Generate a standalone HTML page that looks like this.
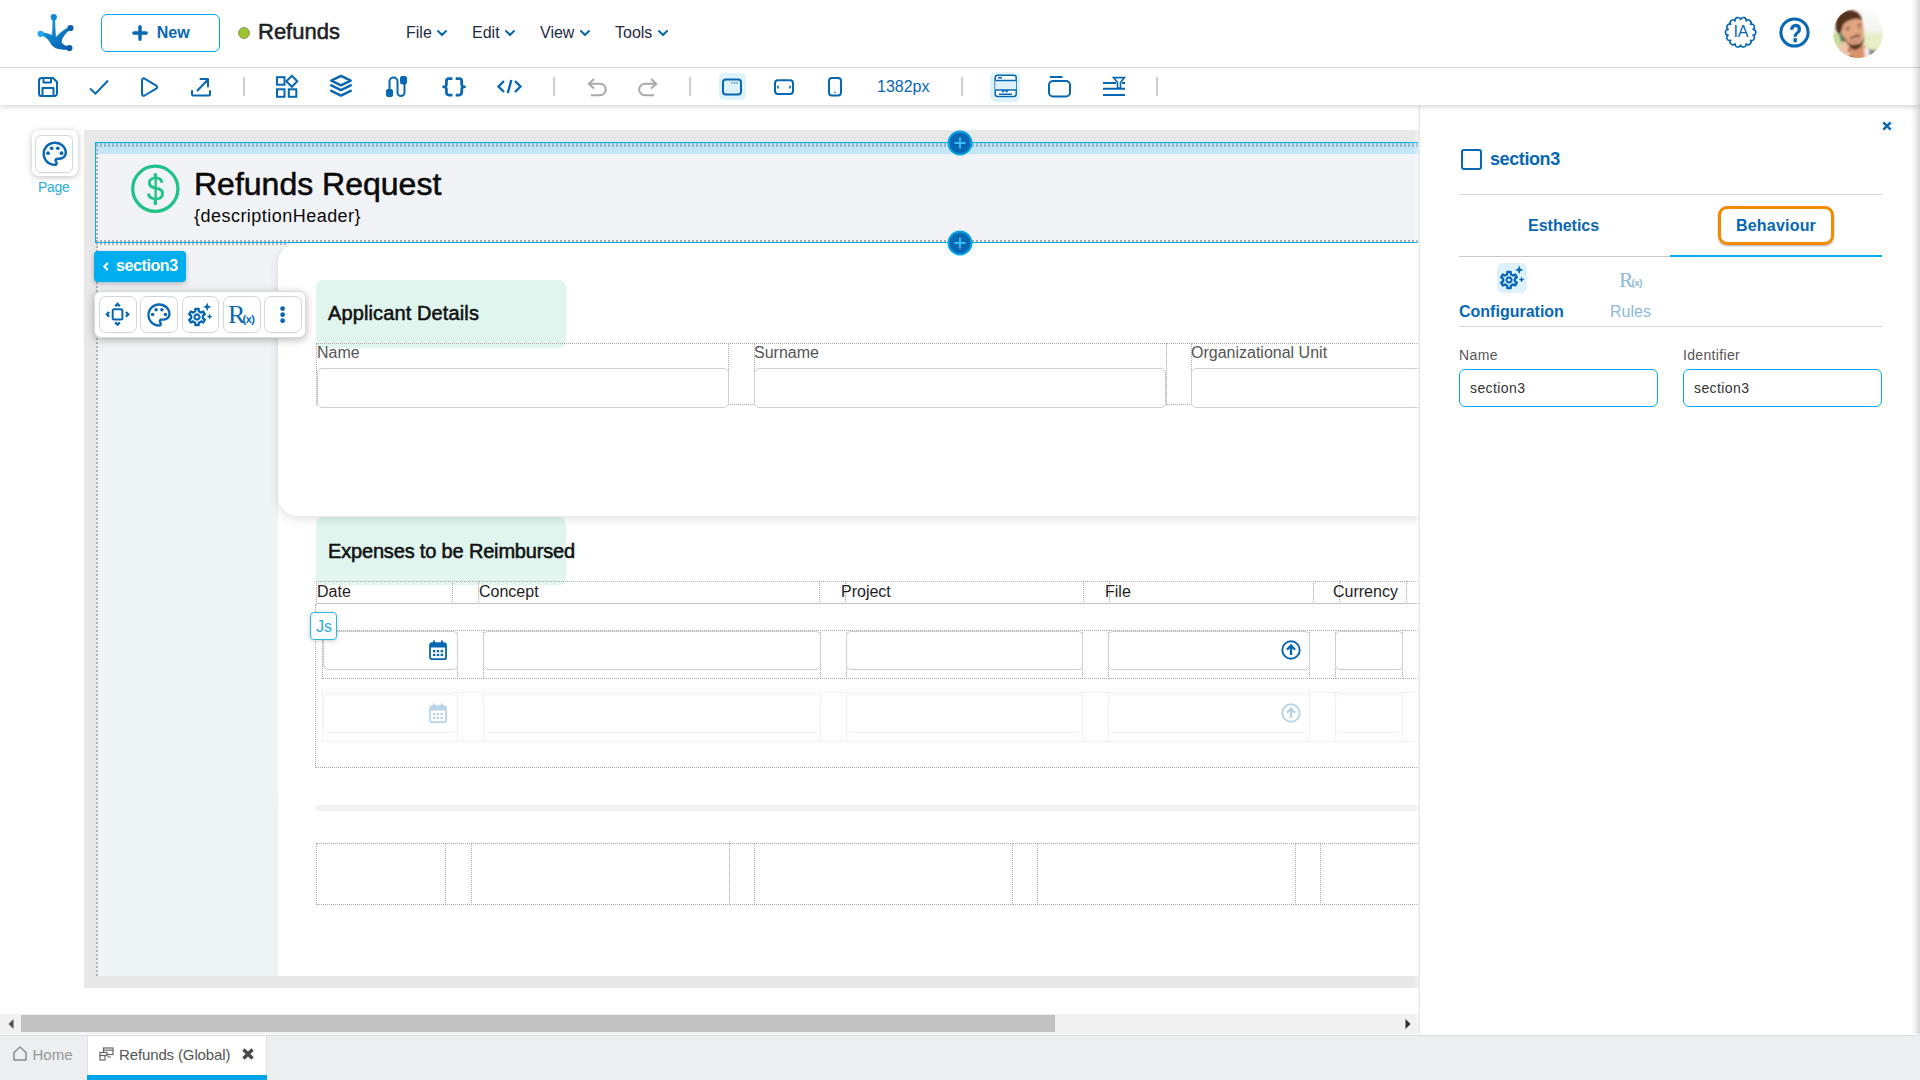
<!DOCTYPE html>
<html lang="en">
<head>
<meta charset="utf-8">
<title>Refunds</title>
<style>
*{box-sizing:border-box;margin:0;padding:0}
html,body{width:1920px;height:1080px;overflow:hidden;background:#fff}
body{font-family:"Liberation Sans",sans-serif;color:#212529;position:relative}
svg{display:block;overflow:visible;position:absolute}
.t{position:absolute;white-space:nowrap;line-height:1}
.b{font-weight:bold}
.m{-webkit-text-stroke:.55px currentColor}
.a{position:absolute}
/* header */
#hdr{position:absolute;left:0;top:0;width:1920px;height:68px;background:#fff;border-bottom:1px solid #d3d8dd;z-index:30}
#newbtn{position:absolute;left:101px;top:14px;width:119px;height:38px;border:1px solid #00a9eb;border-radius:6px;background:#fff}
#tb{position:absolute;left:0;top:68px;width:1920px;height:37px;background:#fff;box-shadow:0 2px 5px rgba(0,0,0,.16);z-index:29}
.sep{position:absolute;top:9px;width:2px;height:19px;background:#cfcfcf}
.menu{color:#1f2a44;font-size:16px;top:25px}
/* canvas */
#main{position:absolute;left:0;top:105px;width:1420px;height:929px;overflow:hidden;background:#fff}
#frame{position:absolute;left:84px;top:25px;width:1340px;height:858px;background:#e8e8e8}
.dot{border:1px dotted #a9a9a9}
.inp{position:absolute;background:#fff;border:1px solid #cfcfcf;border-radius:5px}
.lbl{font-size:16px;color:#555}
.hl{font-size:16px;color:#1e1e1e;top:584px}
/* panel */
#panel{position:absolute;left:1420px;top:105px;width:500px;height:929px;background:#fff;box-shadow:-1.500px 0 0 #e7e9e9,-3px 0 6px rgba(255,255,255,.5);z-index:20}
.pin{position:absolute;height:38px;border:1px solid #00aeef;border-radius:6px;background:#fff}
/* bottom */
#bot{position:absolute;left:0;top:1035px;width:1920px;height:45px;background:#edeef0;border-top:1px solid #d9dcdf;z-index:31}
</style>
</head>
<body>
<div id="hdr">
  <!-- logo -->
  <svg style="left:36px;top:13px" width="40" height="40" viewBox="0 0 40 40">
    <defs><linearGradient id="lg" x1="0" y1="0" x2="1" y2="1"><stop offset="0" stop-color="#1aa3e6"/><stop offset="1" stop-color="#0659a8"/></linearGradient></defs>
    <g fill="url(#lg)" stroke="url(#lg)" stroke-linecap="round">
      <path d="M16.600 4 C17 12 16.600 18 16 22.500 C13 20.800 9 19.800 4.600 19.600 L4.400 22 C9 23 12 26 14 29 C16 33.500 20 36 25 36 C28 36.800 31 36.700 33.400 36.200 L33.600 33.800 C30 33.500 27 32 25.500 29.500 C25.500 25 29 20 34.800 16.200 L33.600 13.900 C27 17 22.500 21 20 24.500 C19 18 19 12 18.900 4 Z" stroke-width="0.5"/>
    </g>
    <circle cx="17.75" cy="4.2" r="3.1" fill="#1389d3"/>
    <circle cx="34.5" cy="15" r="3.1" fill="#0a62b0"/>
    <circle cx="4.6" cy="20.8" r="3.1" fill="#22a8ea"/>
    <circle cx="33.4" cy="35" r="3.1" fill="#0a5cab"/>
  </svg>
  <div id="newbtn">
    <svg style="left:30px;top:10px" width="16" height="16" viewBox="0 0 16 16"><path d="M8 1.8v12.4M1.8 8h12.4" stroke="#0767b2" stroke-width="3.4" stroke-linecap="round" fill="none"/></svg>
    <span class="t b" style="left:54.7px;top:10px;font-size:16px;color:#0767b2">New</span>
  </div>
  <div class="a" style="left:237.700px;top:27px;width:12px;height:12px;border-radius:50%;background:#9cc42c;border:1px solid #8a9a76"></div>
  <span class="t m" id="ttl" style="left:258px;top:21px;font-size:22px;color:#212121">Refunds</span>
  <span class="t menu" style="left:406px">File</span>
  <span class="t menu" style="left:472px">Edit</span>
  <span class="t menu" style="left:540px">View</span>
  <span class="t menu" style="left:615px">Tools</span>
  <svg class="chev" style="left:437px;top:29.500px" width="10" height="7" viewBox="0 0 10 7"><path d="M1 1l4 4 4-4" stroke="#0767b2" stroke-width="2" fill="none" stroke-linecap="round" stroke-linejoin="round"/></svg>
  <svg class="chev" style="left:505px;top:29.500px" width="10" height="7" viewBox="0 0 10 7"><path d="M1 1l4 4 4-4" stroke="#0767b2" stroke-width="2" fill="none" stroke-linecap="round" stroke-linejoin="round"/></svg>
  <svg class="chev" style="left:580px;top:29.500px" width="10" height="7" viewBox="0 0 10 7"><path d="M1 1l4 4 4-4" stroke="#0767b2" stroke-width="2" fill="none" stroke-linecap="round" stroke-linejoin="round"/></svg>
  <svg class="chev" style="left:658px;top:29.500px" width="10" height="7" viewBox="0 0 10 7"><path d="M1 1l4 4 4-4" stroke="#0767b2" stroke-width="2" fill="none" stroke-linecap="round" stroke-linejoin="round"/></svg>
  <!-- IA -->
  <svg id="ia" style="left:1725px;top:17px" width="31" height="31" viewBox="0 0 31 31"><path d="M15.60 2.60 A2.83 2.83 0 0 1 21.11 3.86 A2.83 2.83 0 0 1 25.53 7.38 A2.83 2.83 0 0 1 27.98 12.47 A2.83 2.83 0 0 1 27.98 18.13 A2.83 2.83 0 0 1 25.53 23.22 A2.83 2.83 0 0 1 21.11 26.74 A2.83 2.83 0 0 1 15.60 28.00 A2.83 2.83 0 0 1 10.09 26.74 A2.83 2.83 0 0 1 5.67 23.22 A2.83 2.83 0 0 1 3.22 18.13 A2.83 2.83 0 0 1 3.22 12.47 A2.83 2.83 0 0 1 5.67 7.38 A2.83 2.83 0 0 1 10.09 3.86 A2.83 2.83 0 0 1 15.60 2.60Z" fill="none" stroke="#0767b2" stroke-width="1.600" stroke-linejoin="round"/></svg>
  <span class="t" style="left:1733.500px;top:24.400px;font-size:16px;color:#0767b2;letter-spacing:-.3px">IA</span>
  <!-- help -->
  <svg style="left:1779px;top:17px" width="31" height="31" viewBox="0 0 31 31"><circle cx="15.5" cy="15.5" r="13.6" fill="none" stroke="#0767b2" stroke-width="3"/></svg>
  <span class="t b" style="left:1787.500px;top:21px;font-size:25px;color:#0767b2;transform:scaleX(.84);-webkit-text-stroke:.4px #0767b2">?</span>
  <!-- avatar -->
  <svg id="av" style="left:1833px;top:8px" width="50" height="50" viewBox="0 0 50 50">
    <defs><clipPath id="avc"><circle cx="25" cy="25" r="25"/></clipPath><filter id="avb" x="-20%" y="-20%" width="140%" height="140%"><feGaussianBlur stdDeviation="1"/></filter>
    <linearGradient id="avbg" x1="0" y1="0" x2="0" y2="1"><stop offset="0" stop-color="#fbfbfa"/><stop offset=".42" stop-color="#f4f5f1"/><stop offset=".58" stop-color="#e6edc8"/><stop offset="1" stop-color="#d3e3a2"/></linearGradient></defs>
    <g clip-path="url(#avc)"><rect width="50" height="50" fill="url(#avbg)"/>
    <g filter="url(#avb)">
      <ellipse cx="42" cy="34" rx="9" ry="7" fill="#e9eec6"/>
      <ellipse cx="4" cy="33" rx="6" ry="8" fill="#c9dd9c"/>
      <path d="M18 40l14-3 3 14-19 1z" fill="#d9936b"/>
      <path d="M31 39l5 2 4 10-8 1z" fill="#f1ece9"/>
      <path d="M36 41l8 2 3 9-10 0z" fill="#8b8b95"/>
      <path d="M8.500 14c1-4 6-6.500 12-7 5 0 8.500 3 9.500 9 1 7 1 13-.5 18-1.500 5-5 8.500-8.500 8.500-4 0-8-4-10.500-9-1.500-4-2.500-13-2-19.500z" fill="#e2a582"/>
      <path d="M3 22C1 12 6 4 14 2.500c6-1 12 1 14.500 7.500l.5 3c-2-2-5-2.500-8-2-5 1-9 3-11 6l-2 8-3 1z" fill="#55331e"/>
      <path d="M10 27c.5 6 4 13 12 15 6-1 9-7 9.500-15-1 5-3 8-5.500 9l-7 1c-4-2-7-5-9-10z" fill="#44291a"/>
      <path d="M16.500 29.500c3-1.500 7.500-2 10.500-3.200l.3 1.500c-3 1.500-7.500 2.500-10.500 3z" fill="#6b4330"/>
      <path d="M17.500 31.500c3 .5 6.500-.5 9.500-3-1 4-3 5.500-5 5.500-2 0-3.500-.8-4.500-2.500z" fill="#b3604e"/>
      <path d="M19 31.800c2.300 0 4.500-.8 6.300-2l-.8 1.700-3.800 1z" fill="#f3e7e2"/>
      <path d="M20 38c2 .6 4 .3 6-.8l-1 3-4 .3z" fill="#66492a"/>
      <path d="M12.500 20.500l4.500-1.300M24 17.500l4.500-1.300" stroke="#6a4330" stroke-width="1.200"/>
      <path d="M13.500 22.300l3-.7M25 19.700l3-.7" stroke="#7a4f3c" stroke-width="1"/>
      <path d="M21.500 26.500l2 .8 2.200-1.500" stroke="#bb7656" stroke-width="1.200" fill="none"/>
      <path d="M6 25.500l2.300-.5 2.500 8-2.300 1.500z" fill="#2e6a5a"/>
      <path d="M5 41c1.500-5 5-8 9-6.500l4 6.500-2 9-9-2z" fill="#f0c4a8"/>
      <path d="M14.500 40.500l2.500-.7 1 3.500-2.500 .9z" fill="#b25a50"/>
      <path d="M16 48l4 1-1 3-4-1.500z" fill="#2a2a2a"/>
    </g></g>
  </svg>
</div>
<div id="tb">
 <!-- coords inside are relative to y=68 -->
 <svg style="left:0;top:0" width="1200" height="37" viewBox="0 68 1200 37" fill="none" stroke="#0767b2" stroke-width="2" stroke-linecap="round" stroke-linejoin="round">
  <!-- save -->
  <path d="M39 80.5a2.5 2.5 0 0 1 2.500-2.500h11.500l4 4v11.500a2.500 2.500 0 0 1-2.500 2.500h-13a2.500 2.500 0 0 1-2.500-2.500z"/>
  <path d="M43.500 78.500v4h7.500v-4M42.500 95.500v-7.500h11v7.500"/>
  <!-- check -->
  <path d="M90 88.500l5.500 5.200 12.500-13.200" stroke-linecap="butt" stroke-linejoin="miter"/>
  <!-- play -->
  <path d="M142 80v14c0 1.500 1.300 2.200 2.600 1.500l11.600-6.800c1.300-.8 1.300-2.200 0-3l-11.600-7c-1.300-.8-2.600 0-2.600 1.300z"/>
  <!-- export -->
  <path d="M192 91v3.500a1 1 0 0 0 1 1h16a1 1 0 0 0 1-1v-3.500M197.500 90.500l10.500-11M200.500 79h7.500v7.500"/>
  <!-- grid -->
  <g stroke-linecap="butt" stroke-linejoin="miter" stroke-width="2">
  <rect x="277" y="77.200" width="7.500" height="7.500"/><rect x="277" y="89.300" width="7.500" height="7.500"/><rect x="288.800" y="89.300" width="7.500" height="7.500"/>
  <path d="M291.800 75.800l5.500 5.500-5.500 5.500-5.500-5.500z"/>
  </g>
  <!-- layers -->
  <g stroke-linejoin="round" stroke-width="2.5">
  <path d="M341 75.900l9.700 4.700-9.700 4.700-9.700-4.700z"/>
  <path d="M331.300 85.400l9.700 4.700 9.700-4.700M331.300 90.900l9.700 4.700 9.700-4.700"/>
  </g>
  <!-- route -->
  <path d="M389.500 90v-8.500a4 4 0 0 1 8 0v11a3.500 3.500 0 0 0 7 0v-9"/>
  <rect x="386.500" y="89.500" width="6" height="7" rx="1.500" fill="#0767b2" stroke-width="1"/>
  <rect x="400.500" y="76.500" width="6" height="7.500" rx="1.500" fill="#0767b2" stroke-width="1"/>
  <!-- braces -->
  <g stroke-width="2.8" stroke-linecap="butt" stroke-linejoin="round">
  <path d="M452.4 78.700h-3.500a2.500 2.500 0 0 0-2.500 2.500v3.300a2.400 2.400 0 0 1-2.800 2.400 2.400 2.400 0 0 1 2.800 2.400v3.300a2.500 2.500 0 0 0 2.500 2.500h3.500"/>
  <path d="M455.700 78.700h3.500a2.500 2.500 0 0 1 2.500 2.500v3.300a2.400 2.400 0 0 0 2.800 2.400 2.400 2.400 0 0 0-2.800 2.400v3.300a2.500 2.500 0 0 1-2.500 2.500h-3.500"/>
  </g>
  <!-- code -->
  <g stroke-width="2.400" stroke-linecap="butt" stroke-linejoin="miter">
  <path d="M504 81l-5.500 5.500 5.500 5.500M515 81l5.500 5.500-5.500 5.500M511.300 80l-3.500 13"/>
  </g>
  <!-- undo / redo -->
  <g stroke="#a9a9a9" stroke-linecap="butt" stroke-linejoin="miter">
  <path d="M594 79l-5.200 4.700 5.200 4.700M589 83.700h11a5.800 5.800 0 0 1 0 11.600h-9"/>
  <path d="M651 79l5.200 4.700-5.200 4.700M656 83.700h-11a5.800 5.800 0 0 0 0 11.600h9"/>
  </g>
  <!-- desktop -->
  <rect x="719" y="73" width="27" height="27" rx="5" fill="#ddf2fb" stroke="none"/>
  <rect x="723" y="79.600" width="18" height="14.800" rx="3"/>
  <path d="M731.500 82.800h1.300M734 82.800h1.300M736.500 82.800h1.300" stroke-width="1.300" stroke-linecap="butt"/>
  <!-- tablet -->
  <rect x="775" y="80.200" width="18" height="13.800" rx="3"/>
  <path d="M778 86.300v1.600M790 86.300v1.600" stroke-width="1.600"/>
  <!-- mobile -->
  <rect x="829" y="78" width="12" height="17.600" rx="3"/>
  <path d="M834.300 92.300h1.400" stroke-width="1.300" stroke-linecap="butt"/>
  <!-- layout1 -->
  <rect x="990" y="72" width="30" height="30" rx="6" fill="#ddf2fb" stroke="none"/>
  <g stroke-width="1.500" stroke-linecap="butt">
  <rect x="995.200" y="75.200" width="21" height="21.200" rx="2.500" fill="#fff"/><rect x="995.200" y="80.500" width="21" height="9.500" fill="#ddf2fb" stroke="none"/>
  <path d="M995.200 80.500h21M995.200 90h21M998 77.700h4M1002 91.600h2.300M1005.500 91.600h2.300M999 94.200h13"/>
  </g>
  <!-- layout2 -->
  <path d="M1050 77h12.500" stroke-linecap="butt"/>
  <rect x="1049" y="81" width="21" height="15.500" rx="4"/>
  <!-- layout3 -->
  <g stroke-linecap="butt" stroke-linejoin="miter">
  <path d="M1103 83h13M1122 83h3M1103 88.800h22M1103 95h22"/>
  <path d="M1113.500 77.600h11l-4 5v5.500h-3v-5.500z" stroke-width="1.600"/>
  </g>
 </svg>
 <div class="sep" style="left:243px"></div>
 <div class="sep" style="left:553px"></div>
 <div class="sep" style="left:689px"></div>
 <div class="sep" style="left:961px"></div>
 <div class="sep" style="left:1156px"></div>
 <span class="t" id="pxw" style="left:877px;top:11px;font-size:16px;color:#0767b2">1382px</span>
</div>
<div id="main">
 <!-- all coords relative to main (top = 105) => use wrapper shifted -->
 <div class="a" id="cv" style="left:0;top:-105px;width:1420px;height:1140px">
  <div id="frame" style="left:84px;top:130px;width:1340px;height:858px"></div>
  <!-- page white -->
  <div class="a" style="left:97px;top:143px;width:1330px;height:833px;background:#fff"></div>
  <!-- left column section3 -->
  <div class="a" style="left:278px;top:243px;width:24px;height:24px;background:#f1f2f6"></div>
  <div class="a" style="left:97px;top:243px;width:181px;height:733px;background:linear-gradient(180deg,#f2f3f7 0%,#eff4f5 18%,#eef4f4 100%)"></div>
  <div class="a" style="left:96px;top:244px;width:2px;height:732px;background:repeating-linear-gradient(180deg,transparent 0 2.500px,#b3b3b3 2.500px 4px)"></div>
  <!-- expenses green box (under card shadow) -->
  <div class="a" style="left:316px;top:517px;width:250px;height:68px;background:#dff5ee;border-radius:7px"></div>
  <!-- white card -->
  <div class="a" style="left:278px;top:244px;width:1200px;height:272px;background:#fff;border-radius:18px 0 0 20px;box-shadow:0 3px 10px rgba(0,0,0,.12)"></div>
  <!-- header section (selected) -->
  <div class="a" style="left:96px;top:143px;width:1340px;height:99px;background:#f2f3f7"></div>
  <div class="a" style="left:96px;top:143px;width:1340px;height:11px;background:#c3e5f5"></div>
  <div class="a" style="left:96px;top:143px;width:1340px;height:4px;background:repeating-linear-gradient(90deg,#93b8cc 0 2px,transparent 2px 4px)"></div>
  <div class="a" style="left:96px;top:147px;width:2px;height:94px;background:repeating-linear-gradient(180deg,transparent 0 2px,#b3b3b3 2px 4px)"></div>
  <div class="a" style="left:96px;top:240px;width:1340px;height:2px;background:repeating-linear-gradient(90deg,#aaa 0 2px,transparent 2px 4px)"></div>
  <div class="a" style="left:96px;top:243px;width:192px;height:1.500px;background:repeating-linear-gradient(90deg,#b5b5b5 0 2px,transparent 2px 4px)"></div>
  <div class="a" style="left:95px;top:142px;width:1340px;height:101px;border:1px solid #00b2ec"></div>
  <!-- dollar icon -->
  <svg style="left:131px;top:165px" width="48" height="48" viewBox="0 0 48 48"><circle cx="24.3" cy="23.8" r="22.6" fill="none" stroke="#20c387" stroke-width="3.3"/><path d="M24.3 8.300v5M24.3 35v5" stroke="#20c387" stroke-width="3.200"/></svg>
  <span class="t" id="dol" style="left:145.800px;top:171px;font-size:34px;color:#20c387;-webkit-text-stroke:.3px #20c387;transform:scaleX(.93)">$</span>
  <span class="t m" id="h1" style="left:194px;top:168px;font-size:32px;color:#0a0a0a">Refunds Request</span>
  <span class="t" id="h2" style="letter-spacing:.47px;left:194px;top:207px;font-size:18px;color:#0a0a0a">{descriptionHeader}</span>
  <!-- plus handles -->
  <svg style="left:947px;top:130px" width="26" height="26" viewBox="0 0 26 26"><circle cx="13" cy="13" r="11.500" fill="#0767b2" stroke="#00a3e4" stroke-width="2"/><path d="M13 7.500v11M7.500 13h11" stroke="#3cc0f5" stroke-width="1.800"/></svg>
  <svg style="left:947px;top:230px" width="26" height="26" viewBox="0 0 26 26"><circle cx="13" cy="13" r="11.500" fill="#0767b2" stroke="#00a3e4" stroke-width="2"/><path d="M13 7.500v11M7.500 13h11" stroke="#3cc0f5" stroke-width="1.800"/></svg>
  <!-- section3 tag -->
  <div class="a" style="left:94px;top:251px;width:92px;height:31px;background:#00aeef;border-radius:4px;box-shadow:0 2px 5px rgba(0,0,0,.25)">
    <svg style="left:9px;top:11px" width="6" height="9" viewBox="0 0 6 9"><path d="M4.800 1L1.300 4.500 4.800 8" stroke="#fff" stroke-width="2" fill="none"/></svg>
    <span class="t b" id="tag" style="letter-spacing:-.4px;left:22px;top:7px;font-size:16px;color:#fff">section3</span>
  </div>
  <!-- floating toolbar -->
  <div class="a" id="ft" style="left:94px;top:290.500px;width:211.500px;height:47px;background:#fff;border:1px solid #d8dadd;border-radius:7px;box-shadow:0 2px 8px rgba(0,0,0,.28)"></div>
  <!-- Applicant details -->
  <div class="a" style="left:316px;top:280px;width:250px;height:68px;background:#dff5ee;border-radius:7px"></div>
  <span class="t m" id="ad" style="letter-spacing:.12px;left:328px;top:303px;font-size:20px;color:#111">Applicant Details</span>
  <div class="a dot" style="left:316px;top:343px;width:413px;height:62px"></div>
  <div class="a dot" style="left:728px;top:343px;width:27px;height:62px"></div>
  <div class="a dot" style="left:754px;top:343px;width:413px;height:62px"></div>
  <div class="a dot" style="left:1166px;top:343px;width:26px;height:62px"></div>
  <div class="a dot" style="left:1191px;top:343px;width:300px;height:62px"></div>
  <span class="t lbl" style="left:317px;top:345.2px">Name</span>
  <span class="t lbl" style="left:754px;top:345.2px">Surname</span>
  <span class="t lbl" style="left:1191px;top:345.2px">Organizational Unit</span>
  <div class="inp" style="left:317px;top:368px;width:412px;height:40px"></div>
  <div class="inp" style="left:754px;top:368px;width:412px;height:40px"></div>
  <div class="inp" style="left:1191px;top:368px;width:300px;height:40px"></div>
  <!-- Expenses -->
  <span class="t m" id="ex" style="letter-spacing:-.17px;left:328px;top:541px;font-size:20px;color:#111">Expenses to be Reimbursed</span>
  <!-- table header -->
  <div class="a dot" style="left:316px;top:581px;width:137px;height:23px"></div>
  <div class="a dot" style="left:452px;top:581px;width:27px;height:23px"></div>
  <div class="a dot" style="left:478px;top:581px;width:342px;height:23px"></div>
  <div class="a dot" style="left:819px;top:581px;width:27px;height:23px"></div>
  <div class="a dot" style="left:845px;top:581px;width:239px;height:23px"></div>
  <div class="a dot" style="left:1083px;top:581px;width:27px;height:23px"></div>
  <div class="a dot" style="left:1109px;top:581px;width:205px;height:23px"></div>
  <div class="a dot" style="left:1313px;top:581px;width:27px;height:23px"></div>
  <div class="a dot" style="left:1339px;top:581px;width:68px;height:23px"></div>
  <div class="a dot" style="left:1406px;top:581px;width:40px;height:23px"></div>
  <div class="a" style="left:316px;top:603px;width:1130px;height:1px;background:#c4c4c4"></div>
  <span class="t hl" style="left:317px">Date</span>
  <span class="t hl" style="left:479px">Concept</span>
  <span class="t hl" style="left:841px">Project</span>
  <span class="t hl" style="left:1105px">File</span>
  <span class="t hl" style="left:1333px">Currency</span>
  <!-- table body container -->
  <div class="a dot" style="left:315px;top:604px;width:1130px;height:164px;border-top:none"></div>
  <!-- row 1 -->
  <div class="a" id="row1" style="left:0;top:0">
   <div class="a dot" style="left:322px;top:630px;width:136px;height:49px"></div>
   <div class="a dot" style="left:457px;top:630px;width:27px;height:49px"></div>
   <div class="a dot" style="left:483px;top:630px;width:338px;height:49px"></div>
   <div class="a dot" style="left:820px;top:630px;width:27px;height:49px"></div>
   <div class="a dot" style="left:846px;top:630px;width:237px;height:49px"></div>
   <div class="a dot" style="left:1082px;top:630px;width:27px;height:49px"></div>
   <div class="a dot" style="left:1108px;top:630px;width:202px;height:49px"></div>
   <div class="a dot" style="left:1309px;top:630px;width:27px;height:49px"></div>
   <div class="a dot" style="left:1335px;top:630px;width:68px;height:49px"></div>
   <div class="a dot" style="left:1402px;top:630px;width:40px;height:49px"></div>
   <div class="inp" style="left:323px;top:631px;width:135px;height:39px"></div>
   <div class="inp" style="left:483px;top:631px;width:338px;height:39px"></div>
   <div class="inp" style="left:846px;top:631px;width:237px;height:39px"></div>
   <div class="inp" style="left:1108px;top:631px;width:202px;height:39px"></div>
   <div class="inp" style="left:1335px;top:631px;width:68px;height:39px"></div>
   <!-- calendar -->
   <svg style="left:429px;top:640px" width="18" height="20" viewBox="0 0 18 20"><rect x="1" y="3.200" width="16" height="16" rx="2" fill="#fff" stroke="#0767b2" stroke-width="1.800"/><path d="M1 4.500a1.500 1.500 0 0 1 1.500-1.500h13a1.500 1.500 0 0 1 1.500 1.500v3h-16z" fill="#0767b2"/><path d="M5 0.500v4M13 0.500v4" stroke="#0767b2" stroke-width="2"/><g fill="#0767b2"><rect x="4" y="10" width="2.400" height="2.300"/><rect x="7.800" y="10" width="2.400" height="2.300"/><rect x="11.600" y="10" width="2.400" height="2.300"/><rect x="4" y="13.800" width="2.400" height="2.300"/><rect x="7.800" y="13.800" width="2.400" height="2.300"/><rect x="11.600" y="13.800" width="2.400" height="2.300"/></g></svg>
   <!-- upload -->
   <svg style="left:1281px;top:640px" width="20" height="20" viewBox="0 0 20 20"><circle cx="10" cy="10" r="8.700" fill="#fff" stroke="#0767b2" stroke-width="1.900"/><path d="M10 15v-8.500M6 9.800l4-4.300 4 4.300" stroke="#0767b2" stroke-width="2.300" fill="none" stroke-linejoin="miter"/></svg>
  </div>
  <div class="a" id="row2" style="left:0;top:0;opacity:.28">
   <div class="a dot" style="left:322px;top:692px;width:136px;height:50px"></div>
   <div class="a dot" style="left:457px;top:692px;width:27px;height:50px"></div>
   <div class="a dot" style="left:483px;top:692px;width:338px;height:50px"></div>
   <div class="a dot" style="left:820px;top:692px;width:27px;height:50px"></div>
   <div class="a dot" style="left:846px;top:692px;width:237px;height:50px"></div>
   <div class="a dot" style="left:1082px;top:692px;width:27px;height:50px"></div>
   <div class="a dot" style="left:1108px;top:692px;width:202px;height:50px"></div>
   <div class="a dot" style="left:1309px;top:692px;width:27px;height:50px"></div>
   <div class="a dot" style="left:1335px;top:692px;width:68px;height:50px"></div>
   <div class="a dot" style="left:1402px;top:692px;width:40px;height:50px"></div>
   <div class="inp" style="left:323px;top:694px;width:135px;height:39px"></div>
   <div class="inp" style="left:483px;top:694px;width:338px;height:39px"></div>
   <div class="inp" style="left:846px;top:694px;width:237px;height:39px"></div>
   <div class="inp" style="left:1108px;top:694px;width:202px;height:39px"></div>
   <div class="inp" style="left:1335px;top:694px;width:68px;height:39px"></div>
   <!-- calendar -->
   <svg style="left:429px;top:703px" width="18" height="20" viewBox="0 0 18 20"><rect x="1" y="3.200" width="16" height="16" rx="2" fill="#fff" stroke="#0767b2" stroke-width="1.800"/><path d="M1 4.500a1.500 1.500 0 0 1 1.500-1.500h13a1.500 1.500 0 0 1 1.500 1.500v3h-16z" fill="#0767b2"/><path d="M5 0.500v4M13 0.500v4" stroke="#0767b2" stroke-width="2"/><g fill="#0767b2"><rect x="4" y="10" width="2.400" height="2.300"/><rect x="7.800" y="10" width="2.400" height="2.300"/><rect x="11.600" y="10" width="2.400" height="2.300"/><rect x="4" y="13.800" width="2.400" height="2.300"/><rect x="7.800" y="13.800" width="2.400" height="2.300"/><rect x="11.600" y="13.800" width="2.400" height="2.300"/></g></svg>
   <!-- upload -->
   <svg style="left:1281px;top:703px" width="20" height="20" viewBox="0 0 20 20"><circle cx="10" cy="10" r="8.700" fill="#fff" stroke="#0767b2" stroke-width="1.900"/><path d="M10 15v-8.500M6 9.800l4-4.300 4 4.300" stroke="#0767b2" stroke-width="2.300" fill="none" stroke-linejoin="miter"/></svg>
  </div>
  <!-- JS badge -->
  <div class="a" style="left:310px;top:612px;width:27px;height:28px;background:#fff;border:1px solid #29b6e8;border-radius:4px;box-shadow:0 1px 4px rgba(0,0,0,.2)"><span class="t" id="js" style="left:5px;top:6px;font-size:16px;color:#29abe2">Js</span></div>
  <!-- bottom bar + cells -->
  <div class="a" style="left:316px;top:805px;width:1130px;height:6px;background:#f2f2f2"></div>
  <div class="a dot" style="left:316px;top:843px;width:130px;height:62px"></div>
  <div class="a dot" style="left:445px;top:843px;width:27px;height:62px"></div>
  <div class="a dot" style="left:471px;top:843px;width:259px;height:62px"></div>
  <div class="a dot" style="left:729px;top:843px;width:26px;height:62px"></div>
  <div class="a dot" style="left:754px;top:843px;width:259px;height:62px"></div>
  <div class="a dot" style="left:1012px;top:843px;width:26px;height:62px"></div>
  <div class="a dot" style="left:1037px;top:843px;width:259px;height:62px"></div>
  <div class="a dot" style="left:1295px;top:843px;width:26px;height:62px"></div>
  <div class="a dot" style="left:1320px;top:843px;width:259px;height:62px"></div>
 </div>
</div>
<div class="a" id="fl" style="left:0;top:0;z-index:12">
<div class="a" style="left:32px;top:130px;width:46px;height:46px;background:#fff;border-radius:7px;box-shadow:0 1px 6px rgba(0,0,0,.25)"></div>
<div class="a" style="left:35px;top:135px;width:38px;height:38px;background:#fff;border:1px solid #d3d6da;border-radius:6px"></div>
<svg style="left:39.75px;top:138.55px" width="29.5" height="29.5" viewBox="0 0 24 24" fill="#0767b2"><path d="M12 22C6.490 22 2 17.510 2 12S6.490 2 12 2s10 4.040 10 9c0 3.310-2.690 6-6 6h-1.770c-.280 0-.500.220-.500.500 0 .120.050.230.130.330.410.470.640 1.060.640 1.670A2.500 2.500 0 0 1 12 22zm0-18c-4.410 0-8 3.590-8 8s3.590 8 8 8c.280 0 .500-.220.500-.500a.540.540 0 0 0-.140-.350c-.410-.460-.630-1.050-.630-1.650a2.500 2.500 0 0 1 2.500-2.500H16c2.210 0 4-1.790 4-4 0-3.860-3.590-7-8-7z"/><circle cx="6.500" cy="11.500" r="1.500"/><circle cx="9.500" cy="7.500" r="1.500"/><circle cx="14.500" cy="7.500" r="1.500"/><circle cx="17.500" cy="11.500" r="1.500"/></svg>
<span class="t" id="pg" style="left:38px;top:180px;font-size:14px;letter-spacing:-.3px;color:#29abe2">Page</span>
<div class="a" style="left:99.3px;top:296.200px;width:37.400px;height:36.600px;border:1px solid #d3d6da;border-radius:7px;background:#fff"></div>
<div class="a" style="left:140.3px;top:296.200px;width:37.400px;height:36.600px;border:1px solid #d3d6da;border-radius:7px;background:#fff"></div>
<div class="a" style="left:182px;top:296.200px;width:37.400px;height:36.600px;border:1px solid #d3d6da;border-radius:7px;background:#fff"></div>
<div class="a" style="left:223.3px;top:296.200px;width:37.400px;height:36.600px;border:1px solid #d3d6da;border-radius:7px;background:#fff"></div>
<div class="a" style="left:264.3px;top:296.200px;width:37.400px;height:36.600px;border:1px solid #d3d6da;border-radius:7px;background:#fff"></div>
<svg style="left:105px;top:302px" width="25" height="25" viewBox="105 302 25 25" fill="none" stroke="#0767b2" stroke-width="2"><rect x="112.700" y="309.200" width="9.700" height="10.200" rx="1.500"/><path d="M115.200 306.300l2.300-2.300 2.300 2.300M115.200 322.400l2.300 2.300 2.300-2.300M109.200 312l-2.300 2.300 2.300 2.300M125.900 312l2.300 2.300-2.300 2.300" stroke-width="2.300"/></svg>
<svg style="left:145.00px;top:301.30px" width="28" height="28" viewBox="0 0 24 24" fill="#0767b2"><path d="M12 22C6.490 22 2 17.510 2 12S6.490 2 12 2s10 4.040 10 9c0 3.310-2.690 6-6 6h-1.770c-.280 0-.500.220-.500.500 0 .120.050.230.130.330.410.470.640 1.060.640 1.670A2.500 2.500 0 0 1 12 22zm0-18c-4.410 0-8 3.590-8 8s3.590 8 8 8c.280 0 .500-.220.500-.500a.540.540 0 0 0-.140-.350c-.410-.460-.630-1.050-.630-1.650a2.500 2.500 0 0 1 2.500-2.500H16c2.210 0 4-1.790 4-4 0-3.860-3.590-7-8-7z"/><circle cx="6.500" cy="11.500" r="1.500"/><circle cx="9.500" cy="7.500" r="1.500"/><circle cx="14.500" cy="7.500" r="1.500"/><circle cx="17.500" cy="11.500" r="1.500"/></svg>
<svg style="left:197.4px;top:316.6px;opacity:1" width="1" height="1" viewBox="0 0 1 1"><g transform="scale(1.0)"><path d="M-1.79 -5.73 L-1.64 -8.14 L1.64 -8.14 L1.79 -5.73 L4.06 -4.42 L6.23 -5.49 L7.87 -2.65 L5.86 -1.31 L5.86 1.31 L7.87 2.65 L6.23 5.49 L4.06 4.42 L1.79 5.73 L1.64 8.14 L-1.64 8.14 L-1.79 5.73 L-4.06 4.42 L-6.23 5.49 L-7.87 2.65 L-5.86 1.31 L-5.86 -1.31 L-7.87 -2.65 L-6.23 -5.49 L-4.06 -4.42Z" fill="none" stroke="#0767b2" stroke-width="2.350" stroke-linejoin="round"/><circle cx="0" cy="0" r="2.600" fill="none" stroke="#0767b2" stroke-width="2.100"/><path d="M10.20 -14.40 L11.42 -11.32 L14.50 -10.10 L11.42 -8.88 L10.20 -5.80 L8.98 -8.88 L5.90 -10.10 L8.98 -11.32Z" fill="#0767b2"/><path d="M12.60 -3.40 L13.45 -1.25 L15.60 -0.40 L13.45 0.45 L12.60 2.60 L11.75 0.45 L9.60 -0.40 L11.75 -1.25Z" fill="#0767b2"/></g></svg>
<span class="t" style="left:228px;top:302px;font-family:'Liberation Serif',serif;font-size:26px;color:#0767b2">R</span>
<span class="t" style="left:242.500px;top:313.500px;font-size:11px;font-weight:bold;color:#0767b2;letter-spacing:-0.500px">(x)</span>
<svg style="left:279px;top:305px" width="7" height="19" viewBox="279 305 7 19" fill="#0767b2"><circle cx="282.600" cy="308.600" r="2.400"/><circle cx="282.600" cy="314.700" r="2.400"/><circle cx="282.600" cy="320.700" r="2.400"/></svg>
</div>
<div id="panel">
 <div class="a" id="pn" style="left:-1420px;top:-105px;width:1920px;height:1080px">
  <!-- close -->
  <svg style="left:1882px;top:121px" width="10" height="10" viewBox="0 0 10 10"><path d="M1.300 1.300l7.400 7.400M8.700 1.300L1.300 8.700" stroke="#0767b2" stroke-width="2.400" stroke-linecap="butt"/></svg>
  <!-- title -->
  <div class="a" style="left:1461px;top:149px;width:21px;height:21px;border:2px solid #0767b2;border-radius:3px"></div>
  <span class="t b" id="ptitle" style="letter-spacing:-.4px;left:1490px;top:150px;font-size:18px;color:#0767b2">section3</span>
  <div class="a" style="left:1459px;top:194px;width:423px;height:1px;background:#d4d4d4"></div>
  <!-- tabs -->
  <span class="t b" id="tab1" style="left:1528px;top:218px;font-size:16px;color:#0767b2">Esthetics</span>
  <div class="a" style="left:1718px;top:206px;width:116px;height:39px;border:3px solid #f18a00;border-radius:9px;box-shadow:0 1px 2px rgba(0,0,0,.35)"></div>
  <span class="t b" id="tab2" style="letter-spacing:.2px;left:1736px;top:218px;font-size:16px;color:#0767b2">Behaviour</span>
  <div class="a" style="left:1459px;top:256px;width:211px;height:1px;background:#c9c9c9"></div>
  <div class="a" style="left:1670px;top:255px;width:212px;height:2px;background:#00aeef"></div>
  <!-- sub tabs -->
  <div class="a" style="left:1497px;top:263px;width:30px;height:30px;border-radius:6px;background:#ddf2fb"></div>
  <span class="t b" id="cfg" style="left:1459px;top:304px;font-size:16px;color:#0767b2">Configuration</span>
  <span class="t" id="rules" style="left:1610px;top:304px;font-size:16px;color:#8db7db">Rules</span>
  <div class="a" style="left:1459px;top:326px;width:423px;height:1px;background:#d4d4d4"></div>
  <!-- fields -->
  <span class="t" id="lname" style="letter-spacing:.4px;left:1459px;top:348px;font-size:14px;color:#555">Name</span>
  <span class="t" id="lid" style="letter-spacing:.33px;left:1683px;top:348px;font-size:14px;color:#555">Identifier</span>
  <div class="pin" style="left:1459px;top:369px;width:199px"><span class="t" style="left:10px;top:11px;font-size:14px;letter-spacing:.4px;color:#333">section3</span></div>
  <div class="pin" style="left:1683px;top:369px;width:199px"><span class="t" style="left:10px;top:11px;font-size:14px;letter-spacing:.4px;color:#333">section3</span></div>
 </div>
</div>
<div class="a" style="left:1910px;top:0;width:10px;height:1034px;z-index:40;background:linear-gradient(90deg,rgba(0,0,0,0) 0%,rgba(0,0,0,.03) 35%,rgba(0,0,0,.09) 70%,rgba(0,0,0,.17) 100%)"></div>
<div class="a" style="left:0;top:0;z-index:21">
<svg style="left:1508.6px;top:279.7px;opacity:1" width="1" height="1" viewBox="0 0 1 1"><g transform="scale(1.0)"><path d="M-1.79 -5.73 L-1.64 -8.14 L1.64 -8.14 L1.79 -5.73 L4.06 -4.42 L6.23 -5.49 L7.87 -2.65 L5.86 -1.31 L5.86 1.31 L7.87 2.65 L6.23 5.49 L4.06 4.42 L1.79 5.73 L1.64 8.14 L-1.64 8.14 L-1.79 5.73 L-4.06 4.42 L-6.23 5.49 L-7.87 2.65 L-5.86 1.31 L-5.86 -1.31 L-7.87 -2.65 L-6.23 -5.49 L-4.06 -4.42Z" fill="none" stroke="#0767b2" stroke-width="2.350" stroke-linejoin="round"/><circle cx="0" cy="0" r="2.600" fill="none" stroke="#0767b2" stroke-width="2.100"/><path d="M10.20 -14.40 L11.42 -11.32 L14.50 -10.10 L11.42 -8.88 L10.20 -5.80 L8.98 -8.88 L5.90 -10.10 L8.98 -11.32Z" fill="#0767b2"/><path d="M12.60 -3.40 L13.45 -1.25 L15.60 -0.40 L13.45 0.45 L12.60 2.60 L11.75 0.45 L9.60 -0.40 L11.75 -1.25Z" fill="#0767b2"/></g></svg>
<span class="t" style="left:1619px;top:270px;font-family:'Liberation Serif',serif;font-size:21.500px;color:#8db7db">R</span>
<span class="t" style="left:1631.500px;top:278px;font-size:9.500px;font-weight:bold;color:#8db7db;letter-spacing:-0.300px">(x)</span>
</div>
<!-- scrollbar -->
<div class="a" style="left:0;top:1014px;width:1420px;height:20px;background:#f1f1f1;z-index:10">
  <div class="a" style="left:21px;top:1px;width:1034px;height:17px;background:#c1c1c1"></div>
  <svg style="left:8px;top:5px" width="6" height="10" viewBox="0 0 6 10"><path d="M5.500 0v10L0.500 5z" fill="#505050"/></svg>
  <svg style="left:1405px;top:5px" width="6" height="10" viewBox="0 0 6 10"><path d="M0.500 0v10L5.500 5z" fill="#303030"/></svg>
</div>
<div id="bot">
  <svg style="left:13px;top:9.500px" width="14" height="15" viewBox="0 0 14 15"><path d="M1 6.500L7 1l6 5.500v7.500H1z" fill="none" stroke="#8a8a8a" stroke-width="1.500" stroke-linejoin="round"/></svg>
  <span class="t" id="home" style="left:32.500px;top:10.700px;font-size:15px;color:#969696">Home</span>
  <div class="a" style="left:87px;top:0;width:180px;height:44px;background:#fff;border-left:1px solid #e1e3e6;border-right:1px solid #e1e3e6">
    <div class="a" style="left:-1px;top:39px;width:180px;height:5px;background:#00a3e8"></div>
    <svg style="left:11px;top:10.500px" width="15" height="14" viewBox="0 0 15 14" fill="none" stroke="#666" stroke-width="1.200"><rect x="4.500" y="1" width="9.500" height="6.500"/><path d="M4.500 3.200h9.500"/><rect x="1" y="5.500" width="7" height="3" fill="#fff"/><rect x="1" y="8.500" width="5" height="4.500" fill="#fff"/><path d="M8.500 10h3"/></svg>
    <span class="t" id="rg" style="left:31px;top:10.700px;font-size:15px;letter-spacing:-.13px;color:#555">Refunds (Global)</span>
    <svg style="left:154px;top:11.500px" width="12" height="12" viewBox="0 0 12 12"><path d="M1.500 1.500l9 9M10.500 1.500l-9 9" stroke="#4a4a4a" stroke-width="3.300"/></svg>
  </div>
</div>
</body>
</html>
